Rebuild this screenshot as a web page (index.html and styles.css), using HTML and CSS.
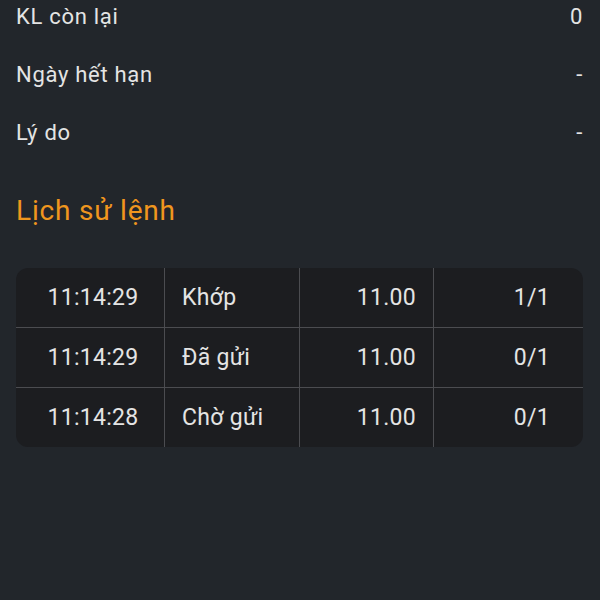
FILE: index.html
```html
<!DOCTYPE html>
<html lang="vi">

<head>
    <meta charset="UTF-8">
    <meta name="viewport" content="width=device-width, initial-scale=1.0">
    <title>Chi tiết lệnh</title>
    <link rel="stylesheet" href="styles.css">
</head>

<body>

    <div class="page">
        <div class="info">
            <div class="info-row">
                <span class="label">KL còn lại</span>
                <span class="value">0</span>
            </div>
            <div class="info-row">
                <span class="label">Ngày hết hạn</span>
                <span class="value">-</span>
            </div>
            <div class="info-row">
                <span class="label">Lý do</span>
                <span class="value">-</span>
            </div>
        </div>

        <h2 class="section-title">Lịch sử lệnh</h2>

        <table class="history">
            <tr>
                <td class="time">11:14:29</td>
                <td class="status">Khớp</td>
                <td class="price">11.00</td>
                <td class="qty">1/1</td>
            </tr>
            <tr>
                <td class="time">11:14:29</td>
                <td class="status">Đã gửi</td>
                <td class="price">11.00</td>
                <td class="qty">0/1</td>
            </tr>
            <tr>
                <td class="time">11:14:28</td>
                <td class="status">Chờ gửi</td>
                <td class="price">11.00</td>
                <td class="qty">0/1</td>
            </tr>
        </table>
    </div>

</body>

</html>
```

FILE: styles.css
```css
body {
    margin: 0;
    height: 100vh;
    overflow: hidden;
    background-color: #22262b;
    font-family: Roboto, "Noto Sans", sans-serif;
    color: #e4e4e4;
}

.page {
    padding: 0 17px 0 16px;
}

.info {
    margin-top: -13px;
}

.info-row {
    display: flex;
    justify-content: space-between;
    align-items: center;
    height: 58px;
    font-size: 22px;
    letter-spacing: 0.7px;
}

.section-title {
    margin: 33px 0 0;
    height: 34px;
    line-height: 34px;
    font-size: 28px;
    font-weight: normal;
    letter-spacing: 0.8px;
    color: #f0961e;
}

.history {
    width: 100%;
    margin-top: 40px;
    border-collapse: separate;
    border-spacing: 0;
    background-color: #1c1d20;
    border-radius: 12px;
    font-size: 23px;
    letter-spacing: 0.3px;
}

.history td {
    height: 59px;
    padding: 0;
    border-right: 1px solid #4b4c50;
    border-bottom: 1px solid #4b4c50;
}

.history tr:last-child td {
    border-bottom: none;
}

.history td:last-child {
    border-right: none;
}

.time {
    width: 142px;
    padding-left: 6px !important;
    text-align: center;
}

.status {
    width: 117px;
    padding-left: 17px !important;
}

.price {
    width: 116px;
    padding-right: 17px !important;
    text-align: right;
}

.qty {
    padding-right: 33px !important;
    text-align: right;
}
```
